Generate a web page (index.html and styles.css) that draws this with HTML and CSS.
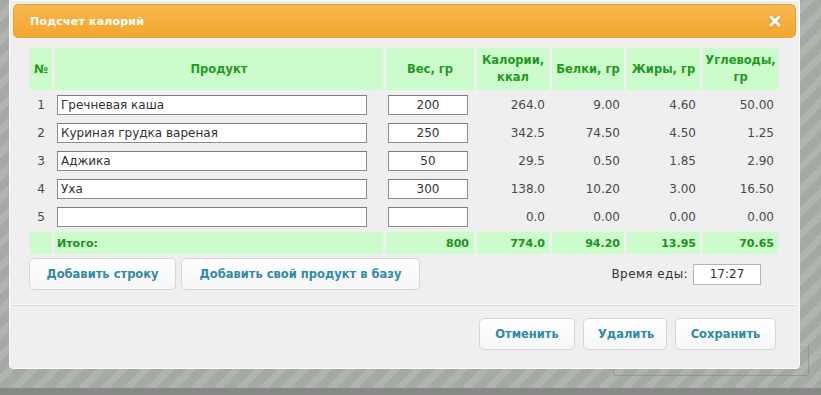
FILE: index.html
```html
<!DOCTYPE html>
<html lang="ru">
<head>
<meta charset="utf-8">
<title>Подсчет калорий</title>
<link rel="stylesheet" href="styles.css">
</head>
<body>
<div class="screen">
  <div class="ghost-box"></div>
  <div class="dialog">
    <div class="titlebar">
      <span class="title">Подсчет калорий</span>
      <span class="close" aria-label="Закрыть">
        <svg width="12" height="12" viewBox="0 0 12 12"><path d="M2 2 L10 10 M10 2 L2 10" stroke="#fff" stroke-width="3" stroke-linecap="round" fill="none"/></svg>
      </span>
    </div>
    <div class="content">
      <table class="calc">
        <thead>
          <tr>
            <th class="c-n">№</th>
            <th class="c-prod">Продукт</th>
            <th class="c-w">Вес, гр</th>
            <th class="c-kcal">Калории,<br>ккал</th>
            <th class="c-p">Белки, гр</th>
            <th class="c-f">Жиры, гр</th>
            <th class="c-c">Углеводы,<br>гр</th>
          </tr>
        </thead>
        <tbody>
          <tr>
            <td class="idx">1</td>
            <td class="prod"><input class="field field-prod" value="Гречневая каша"></td>
            <td class="wt"><input class="field field-wt" value="200"></td>
            <td class="num">264.0</td><td class="num">9.00</td><td class="num">4.60</td><td class="num">50.00</td>
          </tr>
          <tr>
            <td class="idx">2</td>
            <td class="prod"><input class="field field-prod" value="Куриная грудка вареная"></td>
            <td class="wt"><input class="field field-wt" value="250"></td>
            <td class="num">342.5</td><td class="num">74.50</td><td class="num">4.50</td><td class="num">1.25</td>
          </tr>
          <tr>
            <td class="idx">3</td>
            <td class="prod"><input class="field field-prod" value="Аджика"></td>
            <td class="wt"><input class="field field-wt" value="50"></td>
            <td class="num">29.5</td><td class="num">0.50</td><td class="num">1.85</td><td class="num">2.90</td>
          </tr>
          <tr>
            <td class="idx">4</td>
            <td class="prod"><input class="field field-prod" value="Уха"></td>
            <td class="wt"><input class="field field-wt" value="300"></td>
            <td class="num">138.0</td><td class="num">10.20</td><td class="num">3.00</td><td class="num">16.50</td>
          </tr>
          <tr>
            <td class="idx">5</td>
            <td class="prod"><input class="field field-prod" value=""></td>
            <td class="wt"><input class="field field-wt" value=""></td>
            <td class="num">0.0</td><td class="num">0.00</td><td class="num">0.00</td><td class="num">0.00</td>
          </tr>
        </tbody>
        <tfoot>
          <tr class="total">
            <td></td>
            <td class="total-label">Итого:</td>
            <td class="num num-wt">800</td>
            <td class="num">774.0</td><td class="num">94.20</td><td class="num">13.95</td><td class="num">70.65</td>
          </tr>
        </tfoot>
      </table>
      <div class="actions">
        <button class="btn btn-add">Добавить строку</button>
        <button class="btn btn-base">Добавить свой продукт в базу</button>
        <label class="meal-time">Время еды: <input class="field field-time" value="17:27"></label>
      </div>
    </div>
    <div class="separator"></div>
    <div class="footer">
      <button class="btn btn-cancel">Отменить</button>
      <button class="btn btn-del">Удалить</button>
      <button class="btn btn-save">Сохранить</button>
    </div>
  </div>
</div>
<div class="bottom-band"></div>
</body>
</html>
```
FILE: styles.css
```css
html, body {
  margin: 0;
  padding: 0;
}
body {
  width: 821px;
  height: 395px;
  overflow: hidden;
  font-family: "DejaVu Sans", Verdana, sans-serif;
  background: repeating-linear-gradient(135deg, #a5a9a4 0 9px, #b0b3af 9px 16px);
}
.screen {
  position: relative;
  height: 388px;
}
.ghost-box {
  position: absolute;
  left: 613px;
  top: 344px;
  width: 194px;
  height: 30px;
  border: 1px solid rgba(120, 124, 119, 0.45);
  border-top-color: rgba(200, 203, 199, 0.45);
  border-radius: 3px;
}
.dialog {
  position: relative;
  box-sizing: border-box;
  width: 791px;
  margin-left: 9px;
  height: 369px;
  padding: 3px;
  background: #efefef;
  border: 1px solid #fbfbfb;
  border-radius: 0 0 4px 4px;
}
.titlebar {
  box-sizing: border-box;
  height: 34px;
  display: flex;
  align-items: center;
  justify-content: space-between;
  padding: 0 14px 0 16px;
  border: 1px solid #e9a03a;
  border-radius: 5px;
  background: linear-gradient(#f8b84f, #f4a52e);
}
.title {
  color: #fff;
  font-weight: bold;
  font-size: 11px;
  letter-spacing: 0.2px;
}
.close {
  display: flex;
  filter: drop-shadow(0 0 1px rgba(170, 110, 20, 0.6));
}
.content {
  padding: 8px 14px 0 14px;
}
.calc {
  width: 754px;
  table-layout: fixed;
  border-collapse: separate;
  border-spacing: 3px 2px;
  font-size: 12px;
  color: #4a4a4a;
}
.calc th,
.calc td {
  box-sizing: border-box;
  padding: 0;
}
.calc th {
  height: 42px;
  background: #ccfccc;
  color: #1f9a1f;
  font-size: 11.5px;
  font-weight: bold;
  line-height: 17px;
  text-align: center;
  vertical-align: middle;
}
.c-n { width: 22px; }
.c-prod { width: 328px; }
.c-w { width: 88px; }
.c-kcal { width: 72px; }
.c-p { width: 72px; }
.c-f { width: 73px; }
.c-c { width: 75px; }
.calc tbody td {
  height: 26px;
  vertical-align: middle;
}
.calc .idx {
  text-align: center;
}
.calc .prod,
.calc .wt {
  padding-left: 2px;
}
.calc .num {
  text-align: right;
  padding-right: 4px;
}
.field {
  box-sizing: border-box;
  display: block;
  height: 20px;
  margin: 0;
  padding: 0 3px;
  border: 1px solid #8c8c8c;
  border-top-color: #7c7c7c;
  background: #fff;
  font-family: "DejaVu Sans", Verdana, sans-serif;
  font-size: 12px;
  color: #333;
  outline: none;
}
.field-prod { width: 310px; }
.field-wt {
  width: 80px;
  text-align: center;
}
.calc .total td {
  height: 22px;
  background: #ccfccc;
  color: #248f24;
  font-size: 11px;
  font-weight: bold;
  vertical-align: middle;
}
.calc .total .total-label {
  padding-left: 2px;
}
.calc .total .num-wt {
  padding-right: 5px;
}
.actions {
  display: flex;
  align-items: center;
  gap: 5px;
  margin-top: 2px;
  padding-left: 2px;
}
.btn {
  box-sizing: border-box;
  height: 32px;
  margin: 0;
  padding: 0 16px;
  border: 1px solid #d6d6d6;
  border-radius: 5px;
  background: linear-gradient(#ffffff, #f6f6f6);
  color: #2f8aa8;
  font-family: "DejaVu Sans", Verdana, sans-serif;
  font-size: 11.5px;
  font-weight: bold;
  cursor: pointer;
}
.btn-add { width: 147px; }
.btn-base { width: 239px; }
.meal-time {
  display: flex;
  align-items: center;
  gap: 5px;
  margin-left: auto;
  margin-right: 21px;
  font-size: 12px;
  color: #333;
  letter-spacing: 0.4px;
}
.field-time {
  width: 68px;
  height: 21px;
  text-align: center;
  border-color: #b4b4b4;
  letter-spacing: 0;
}
.separator {
  margin: 15px 0 0 0;
  height: 0;
  border-top: 1px solid #dadada;
  box-shadow: 0 -1px 0 #f8f8f8;
}
.footer {
  display: flex;
  justify-content: flex-end;
  gap: 8px;
  margin-top: 12px;
  padding-right: 20px;
}
.footer .btn {
  padding: 0 14px;
}
.btn-cancel { width: 96px; }
.btn-del { width: 84px; }
.btn-save { width: 101px; }
.bottom-band {
  height: 7px;
  background: #868985;
}
```
